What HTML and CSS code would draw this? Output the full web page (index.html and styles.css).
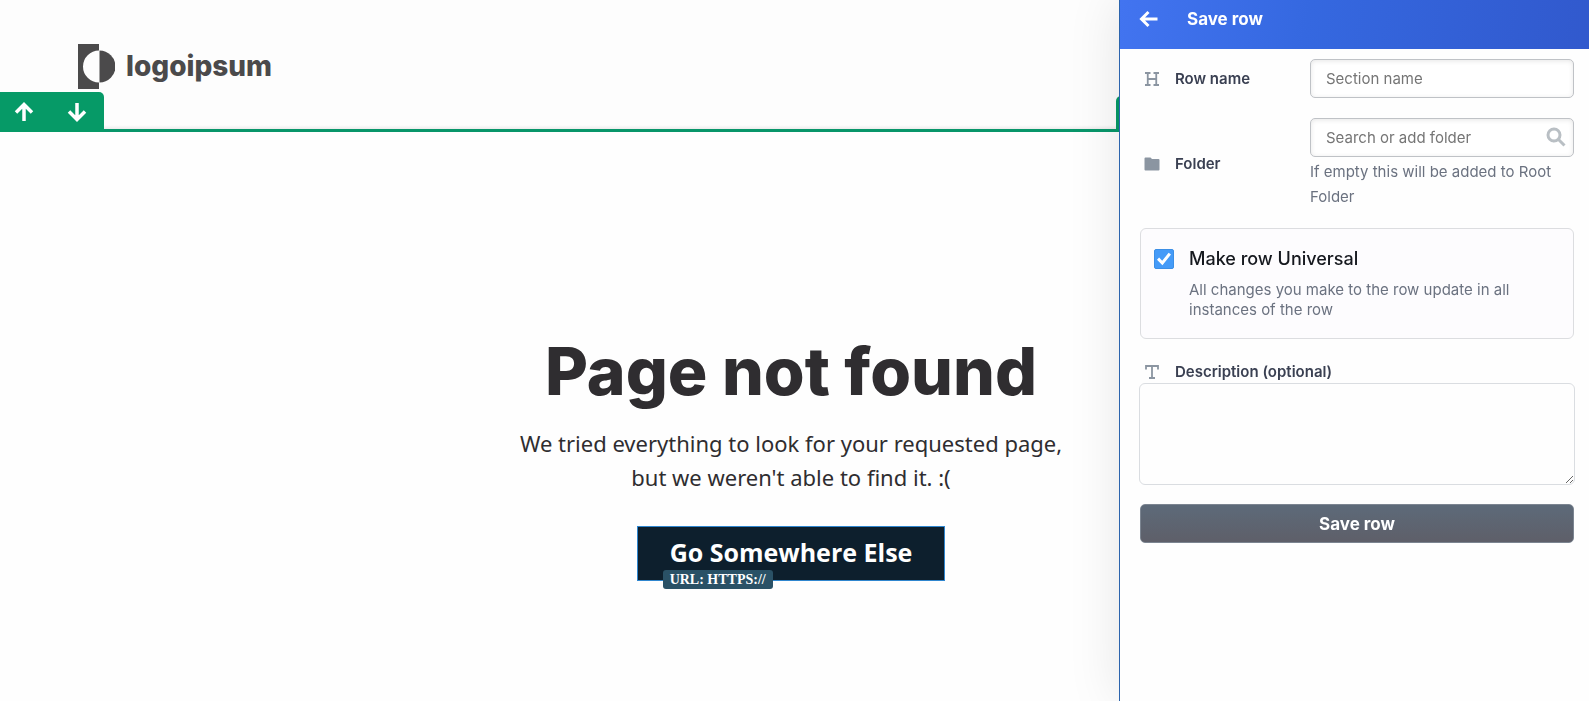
FILE: index.html
```html
<!doctype html>
<html lang="en">
<head>
<meta charset="utf-8">
<meta name="viewport" content="width=device-width, initial-scale=1">

<title>Save row</title>

<link rel="stylesheet" href="styles.css">
</head>
<body>

<div class="canvas">

	<header class="site-header">
		<a class="logo" href="#">
			<svg class="logo-mark" viewBox="0 0 37 45" width="37" height="45" aria-hidden="true">
				<path fill="#4b4a4b" d="M0 0h21v6.500a16 16 0 0 0 0 32V45H0z"/>
				<path fill="#4b4a4b" d="M21.500 6.500a16 16 0 0 1 0 32z"/>
			</svg>
			<span>logoipsum</span>
		</a>

		<div class="row-tools">
			<button type="button" aria-label="Move row up">
				<svg viewBox="0 0 20 20" width="20" height="20"><path d="M10 19V3M2 10.500l8-8 8 8"/></svg>
			</button>
			<button type="button" aria-label="Move row down">
				<svg viewBox="0 0 20 20" width="20" height="20"><path d="M10 1v16M2 9.500l8 8 8-8"/></svg>
			</button>
		</div>
		<div class="row-actions"></div>
	</header>

	<main class="message">
		<h1>Page not found</h1>
		<p>We tried everything to look for your requested page,<br>but we weren't able to find it. :(</p>
		<div class="cta-wrap">
			<a class="cta" href="#">Go Somewhere Else</a>
			<span class="url-tag">URL: HTTPS://</span>
		</div>
	</main>

</div>

<aside class="panel">

	<header class="panel-header">
		<button type="button" class="back" aria-label="Back">
			<svg viewBox="0 0 20 20" width="20" height="20"><path d="M18.500 10H3M9.500 3l-7 7 7 7"/></svg>
		</button>
		<h2>Save row</h2>
	</header>

	<form class="panel-body">

		<div class="field">
			<label for="rowName">
				<svg class="icon" viewBox="0 0 16 16" width="16" height="16"><path d="M1 2h5.500M9.500 2H15M1 14h5.500M9.500 14H15M3.750 2v12M12.250 2v12M3.750 8h8.500" fill="none" stroke="#8b95a1" stroke-width="1.800"/></svg>
				Row name
			</label>
			<input type="text" id="rowName" placeholder="Section name">
		</div>

		<div class="field">
			<label for="folder">
				<svg class="icon" viewBox="0 0 16 16" width="16" height="16"><path d="M1.500 1.500H6.500L8 3h6.500a1 1 0 0 1 1 1v9.500a1 1 0 0 1-1 1h-13a1 1 0 0 1-1-1V2.500a1 1 0 0 1 1-1z" fill="#8b95a1"/></svg>
				Folder
			</label>
			<div>
				<div class="search">
					<input type="text" id="folder" placeholder="Search or add folder">
					<svg viewBox="0 0 20 20" width="20" height="20"><circle cx="8" cy="8" r="6" fill="none" stroke="#b9bfc4" stroke-width="3"/><path d="M12.500 12.500l6 6" stroke="#b9bfc4" stroke-width="3"/></svg>
				</div>
				<p class="hint">If empty this will be added to Root Folder</p>
			</div>
		</div>

		<div class="universal">
			<input type="checkbox" id="universal" checked>
			<div>
				<label for="universal">Make row Universal</label>
				<p>All changes you make to the row update in all instances of the row</p>
			</div>
		</div>

		<div class="description">
			<label for="description">
				<svg class="icon" viewBox="0 0 16 16" width="16" height="16"><path d="M2 5.500V2h12v3.500M8 2v12M5 14h6" fill="none" stroke="#8b95a1" stroke-width="1.800"/></svg>
				Description (optional)
			</label>
			<textarea id="description"></textarea>
		</div>

		<button type="button" class="save">Save row</button>

	</form>

</aside>

</body>
</html>
```
FILE: styles.css
```css
* { box-sizing: border-box; }

body { background: #fefefe; font-family: Inter, "Liberation Sans", sans-serif; margin: 0; min-height: 100vh; overflow-x: hidden; }

h1, h2, p { margin: 0; }

button { border: none; cursor: pointer; font-family: inherit; }

input, textarea { font-family: inherit; }


/* page canvas */

.canvas { padding-right: 7px; }

.site-header {
	background: linear-gradient( #fdfdfd 97%, #ececec );
	border-bottom: 3px solid #08966a;
	height: 132px;
	margin-right: -7px;
	padding: 44px 78px 0;
	position: relative;
}

.logo {
	align-items: center;
	color: #4b4a4b;
	display: inline-flex;
	font-size: 28px;
	font-weight: 800;
	gap: 11px;
	line-height: 45px;
	text-decoration: none;
}

.row-tools {
	background: #069a67;
	border-top-right-radius: 5px;
	bottom: -3px;
	display: flex;
	gap: 13px;
	height: 40px;
	left: 0;
	padding: 0 7px 0 4px;
	position: absolute;
}

.row-tools button { align-items: center; background: none; display: flex; justify-content: center; padding: 0; width: 40px; }

.row-tools path, .back path { fill: none; stroke: #fff; stroke-width: 3.5; }

/* starts just left of the side panel and runs on under it */
.row-actions {
	background: #069a67;
	border-top-left-radius: 5px;
	bottom: -3px;
	height: 36px;
	position: absolute;
	right: 0;
	width: 473px;
}

.message { color: #2f2d30; padding-top: 195px; text-align: center; }

.message h1 { font-size: 66px; font-weight: 800; line-height: 88px; }

.message p { font-family: "Noto Sans", "Open Sans", sans-serif; font-size: 22px; line-height: 34px; margin-top: 11px; }

.cta-wrap { display: inline-block; margin-top: 32px; position: relative; }

.cta {
	background: #0d1f2d;
	border: 1px solid #2f86cf;
	color: #fff;
	display: block;
	font: 700 25px/51px "Open Sans", "Noto Sans", sans-serif;
	padding: 0 32px 2px;
	text-decoration: none;
}

.url-tag {
	background: #2a5166;
	border-radius: 3px;
	bottom: -8px;
	color: #fff;
	font: 700 14px/19px "Liberation Serif", serif;
	left: 26px;
	padding: 0 7px;
	position: absolute;
}


/* side panel */

.panel {
	background: #fefefe;
	border-left: 1px solid #2c64ad;
	bottom: 0;
	box-shadow: 0 0 50px rgba( 0, 0, 0, 0.1 );
	position: fixed;
	right: 0;
	top: 0;
	width: 470px;
}

.panel-header {
	align-items: center;
	background: linear-gradient( 100deg, #4274f0, #3568e0 40%, #3159cd );
	color: #fff;
	display: flex;
	gap: 28px;
	height: 49px;
	padding: 0 19px 11px;
}

.panel-header h2 { font-size: 17px; font-weight: 700; line-height: 24px; }

.back { background: none; display: flex; padding: 0; }
.back path { stroke-width: 3; }

.panel-body { padding: 10px 15px 0 20px; }

.field { align-items: center; display: grid; grid-template-columns: 170px 1fr; margin-bottom: 20px; }

.field label, .description label {
	align-items: center;
	color: #3a4052;
	display: flex;
	font-size: 15px;
	font-weight: 600;
	gap: 15px;
	line-height: 20px;
	padding-left: 4px;
}

.field input {
	background: #fff;
	border: 1px solid #bfc2c6;
	border-radius: 5px;
	box-shadow: inset 0 1px 5px rgba( 0, 0, 0, 0.1 );
	font-size: 15px;
	height: 39px;
	padding: 0 15px;
	width: 100%;
}

.field input::placeholder { color: #757575; }

.search { position: relative; }
.search svg { position: absolute; right: 8px; top: 9px; }

.hint { color: #6b7280; font-size: 15px; line-height: 25px; padding-top: 2px; }

.universal {
	background: #fdfcfe;
	border: 1px solid #dcdde0;
	border-radius: 6px;
	display: flex;
	gap: 15px;
	margin-top: -1px;
	padding: 20px 13px 18px;
}

.universal input {
	appearance: none;
	background: #459bf8;
	border: 1px solid #3c8fe6;
	border-radius: 2px;
	display: grid;
	flex: none;
	height: 20px;
	margin: 0;
	place-items: center;
	width: 20px;
}

.universal input:checked::before {
	background: #fff;
	clip-path: polygon( 0 55%, 15% 40%, 37% 62%, 83% 5%, 100% 18%, 39% 95% );
	content: "";
	height: 14px;
	width: 14px;
}

.universal input:not( :checked ) { background: #fff; }

.universal label { color: #15181e; display: block; font-size: 18px; font-weight: 500; line-height: 20px; }

.universal p { color: #6b7280; font-size: 15px; line-height: 20px; margin-top: 11px; }

.description { margin: 23px -1px 0; }

.description label { padding-left: 5px; }

.description textarea {
	background: #fefefe;
	border: 1px solid #dadde1;
	border-radius: 6px;
	display: block;
	font-size: 15px;
	height: 102px;
	margin-top: 1px;
	padding: 10px;
	resize: vertical;
	width: 100%;
}

.save {
	background: linear-gradient( #5d6a79, #5e5f69 );
	border: 1px solid #7c8591;
	border-radius: 5px;
	color: #fff;
	font-size: 17px;
	font-weight: 700;
	height: 39px;
	margin-top: 19px;
	width: 100%;
}
```
